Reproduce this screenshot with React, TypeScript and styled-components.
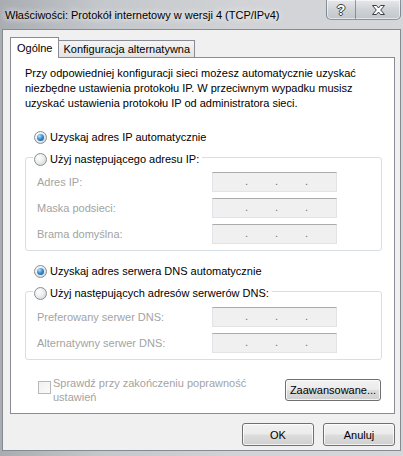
import React from 'react';
import styled, { createGlobalStyle } from 'styled-components';

const GlobalStyle = createGlobalStyle`
  html, body {
    margin: 0;
    padding: 0;
  }
  body {
    width: 403px;
    height: 456px;
    overflow: hidden;
    background: #cfd2d5;
    font-family: "Liberation Sans", Arial, sans-serif;
    font-size: 11px;
    color: #000;
  }
`;

const Window = styled.div`
  width: 403px;
  height: 456px;
  box-sizing: border-box;
  display: flex;
  flex-direction: column;
  padding: 0 2px 5px 2px;
  background: linear-gradient(90deg, #a9adb2 0%, #c4c7cb 25%, #d1d3d6 60%, #d4d6d9 100%);
`;

const TitleBar = styled.div`
  height: 29px;
  display: flex;
  justify-content: space-between;
  align-items: flex-start;
  flex-shrink: 0;
`;

const Title = styled.div`
  margin: 7px 0 0 3px;
  line-height: 16px;
  font-size: 11px;
  color: #000;
  text-shadow: 0 0 6px rgba(255, 255, 255, 0.9), 0 0 10px rgba(255, 255, 255, 0.7);
  white-space: nowrap;
`;

const CaptionGroup = styled.div`
  display: flex;
  height: 19px;
  border: 1px solid rgba(70, 78, 88, 0.55);
  border-top: none;
  border-radius: 0 0 5px 5px;
  overflow: hidden;
  box-shadow: inset 0 0 0 1px rgba(255, 255, 255, 0.55);
  background: linear-gradient(180deg, rgba(235, 237, 240, 0.8) 0%, rgba(205, 209, 214, 0.75) 50%, rgba(190, 195, 201, 0.8) 100%);
`;

const CaptionButton = styled.div<{ $w: number; $divider?: boolean }>`
  width: ${(p) => p.$w}px;
  display: flex;
  align-items: center;
  justify-content: center;
  border-left: ${(p) => (p.$divider ? '1px solid rgba(70, 78, 88, 0.5)' : 'none')};
`;

const HelpGlyph = styled.span`
  font-family: "Liberation Sans", Arial, sans-serif;
  font-weight: bold;
  font-size: 14px;
  line-height: 14px;
  color: #fff;
  text-shadow: -1px 0 #3a3f46, 1px 0 #3a3f46, 0 -1px #3a3f46, 0 1px #3a3f46;
`;

const Body = styled.div`
  flex: 1;
  display: flex;
  flex-direction: column;
  background: #f0f0f0;
  border: 1px solid #868b92;
  padding: 7px 5px 0 7px;
`;

const TabStrip = styled.div`
  display: flex;
  align-items: flex-end;
  height: 21px;
  margin-bottom: -1px;
  position: relative;
  z-index: 1;
`;

const Tab = styled.div<{ $active?: boolean }>`
  box-sizing: border-box;
  border: 1px solid #898c95;
  border-bottom: none;
  white-space: nowrap;
  ${(p) =>
    p.$active
      ? `
    height: 21px;
    line-height: 20px;
    padding: 0 6px;
    background: #fff;
  `
      : `
    height: 17px;
    line-height: 16px;
    margin-bottom: 1px;
    padding: 0 4px;
    border-left: none;
    background: linear-gradient(180deg, #f4f4f4 0%, #ececec 50%, #e2e2e2 100%);
  `}
`;

const Panel = styled.div`
  box-sizing: border-box;
  height: 357px;
  background: #fff;
  border: 1px solid #898c95;
  padding: 8px 12px 0 14px;
  display: flex;
  flex-direction: column;
`;

const Intro = styled.p`
  margin: 0;
  line-height: 15px;
  white-space: nowrap;
`;

const RadioRow = styled.div<{ $top: number }>`
  display: flex;
  align-items: center;
  gap: 3px;
  height: 16px;
  margin: ${(p) => p.$top}px 0 0 9px;
`;

const Radio = styled.span<{ $checked?: boolean }>`
  position: relative;
  box-sizing: border-box;
  width: 13px;
  height: 13px;
  border-radius: 50%;
  border: 1px solid #8b8e90;
  background: radial-gradient(circle at 35% 35%, #ffffff 0%, #eceeef 45%, #c9cbcd 100%);
  flex-shrink: 0;

  &::after {
    content: '';
    display: ${(p) => (p.$checked ? 'block' : 'none')};
    position: absolute;
    left: 2px;
    top: 2px;
    width: 7px;
    height: 7px;
    border-radius: 50%;
    background: radial-gradient(circle at 35% 30%, #b9e2fb 0%, #3d8fd0 45%, #134f8f 100%);
  }
`;

const Group = styled.fieldset<{ $top: number }>`
  margin: 2px 0 0 0;
  padding: 0 0 6px 11px;
  border: 1px solid #d5dfe5;
  border-radius: 3px;
  min-width: 0;

  & > div:first-of-type {
    margin-top: ${(p) => p.$top}px;
  }
`;

const Legend = styled.legend`
  display: flex;
  align-items: center;
  gap: 3px;
  padding: 4px 3px 0 1px;
  margin-left: -4px;
  line-height: 16px;
`;

const Fields = styled.div`
  display: flex;
  flex-direction: column;
  gap: 6px;
`;

const FieldRow = styled.div`
  display: grid;
  grid-template-columns: 175px 125px;
  align-items: center;
  height: 20px;
`;

const FieldLabel = styled.span`
  color: #a3a3a3;
`;

const IpBox = styled.div`
  box-sizing: border-box;
  width: 125px;
  height: 20px;
  display: flex;
  gap: 28px;
  padding-left: 32px;
  background: #f0f0f0;
  border: 1px solid;
  border-color: #ababab #e3e3e3 #e3e3e3 #e2e3ea;
  line-height: 16px;
`;

const Dot = styled.span`
  width: 2px;
  text-align: center;
  color: #6f6f6f;
  font-size: 11px;
`;

const BottomRow = styled.div`
  display: flex;
  align-items: flex-start;
  margin-top: 16px;
`;

const CheckBox = styled.span`
  box-sizing: border-box;
  width: 13px;
  height: 13px;
  margin: 5px 0 0 13px;
  border: 1px solid #b8b8b8;
  background: linear-gradient(135deg, #f0f0f0, #fbfbfb);
  flex-shrink: 0;
`;

const CheckLabel = styled.span`
  margin-left: 2px;
  line-height: 14px;
  color: #a3a3a3;
  white-space: nowrap;
`;

const Button = styled.button<{ $w: number; $h: number }>`
  box-sizing: border-box;
  width: ${(p) => p.$w}px;
  height: ${(p) => p.$h}px;
  padding: 0;
  font-family: inherit;
  font-size: 11px;
  color: #000;
  border: 1px solid #707070;
  border-radius: 3px;
  background: linear-gradient(180deg, #f2f2f2 0%, #ebebeb 48%, #dddddd 52%, #cfcfcf 100%);
  box-shadow: inset 0 0 0 1px rgba(255, 255, 255, 0.75);
`;

const AdvancedButton = styled(Button)`
  margin: 3px 1px 0 auto;
`;

const Footer = styled.div`
  display: flex;
  justify-content: flex-end;
  gap: 9px;
  margin-top: 9px;
`;

const CloseGlyph = () => (
  <svg width="15" height="12" viewBox="0 0 15 12">
    <path
      d="M1.5 1.5 H5.5 L7.5 4 L9.5 1.5 H13.5 L9.7 6 L13.5 10.5 H9.5 L7.5 8 L5.5 10.5 H1.5 L5.3 6 Z"
      fill="#fff"
      stroke="#3a3f46"
      strokeWidth="1"
      strokeLinejoin="round"
    />
  </svg>
);

const ipFields = ['Adres IP:', 'Maska podsieci:', 'Brama domyślna:'];
const dnsFields = ['Preferowany serwer DNS:', 'Alternatywny serwer DNS:'];

const IpInput = () => (
  <IpBox>
    <Dot>.</Dot>
    <Dot>.</Dot>
    <Dot>.</Dot>
  </IpBox>
);

export default function App() {
  return (
    <>
      <GlobalStyle />
      <Window>
        <TitleBar>
          <Title>Właściwości: Protokół internetowy w wersji 4 (TCP/IPv4)</Title>
          <CaptionGroup>
            <CaptionButton $w={28}>
              <HelpGlyph>?</HelpGlyph>
            </CaptionButton>
            <CaptionButton $w={44} $divider>
              <CloseGlyph />
            </CaptionButton>
          </CaptionGroup>
        </TitleBar>
        <Body>
          <TabStrip>
            <Tab $active>Ogólne</Tab>
            <Tab>Konfiguracja alternatywna</Tab>
          </TabStrip>
          <Panel>
            <Intro>
              Przy odpowiedniej konfiguracji sieci możesz automatycznie uzyskać
              <br />
              niezbędne ustawienia protokołu IP. W przeciwnym wypadku musisz
              <br />
              uzyskać ustawienia protokołu IP od administratora sieci.
            </Intro>
            <RadioRow $top={18}>
              <Radio $checked />
              Uzyskaj adres IP automatycznie
            </RadioRow>
            <Group $top={5}>
              <Legend>
                <Radio />
                Użyj następującego adresu IP:
              </Legend>
              <Fields>
                {ipFields.map((label) => (
                  <FieldRow key={label}>
                    <FieldLabel>{label}</FieldLabel>
                    <IpInput />
                  </FieldRow>
                ))}
              </Fields>
            </Group>
            <RadioRow $top={12}>
              <Radio $checked />
              Uzyskaj adres serwera DNS automatycznie
            </RadioRow>
            <Group $top={6}>
              <Legend>
                <Radio />
                Użyj następujących adresów serwerów DNS:
              </Legend>
              <Fields>
                {dnsFields.map((label) => (
                  <FieldRow key={label}>
                    <FieldLabel>{label}</FieldLabel>
                    <IpInput />
                  </FieldRow>
                ))}
              </Fields>
            </Group>
            <BottomRow>
              <CheckBox />
              <CheckLabel>
                Sprawdź przy zakończeniu poprawność
                <br />
                ustawień
              </CheckLabel>
              <AdvancedButton $w={96} $h={22}>Zaawansowane...</AdvancedButton>
            </BottomRow>
          </Panel>
          <Footer>
            <Button $w={72} $h={23}>OK</Button>
            <Button $w={72} $h={23}>Anuluj</Button>
          </Footer>
        </Body>
      </Window>
    </>
  );
}
